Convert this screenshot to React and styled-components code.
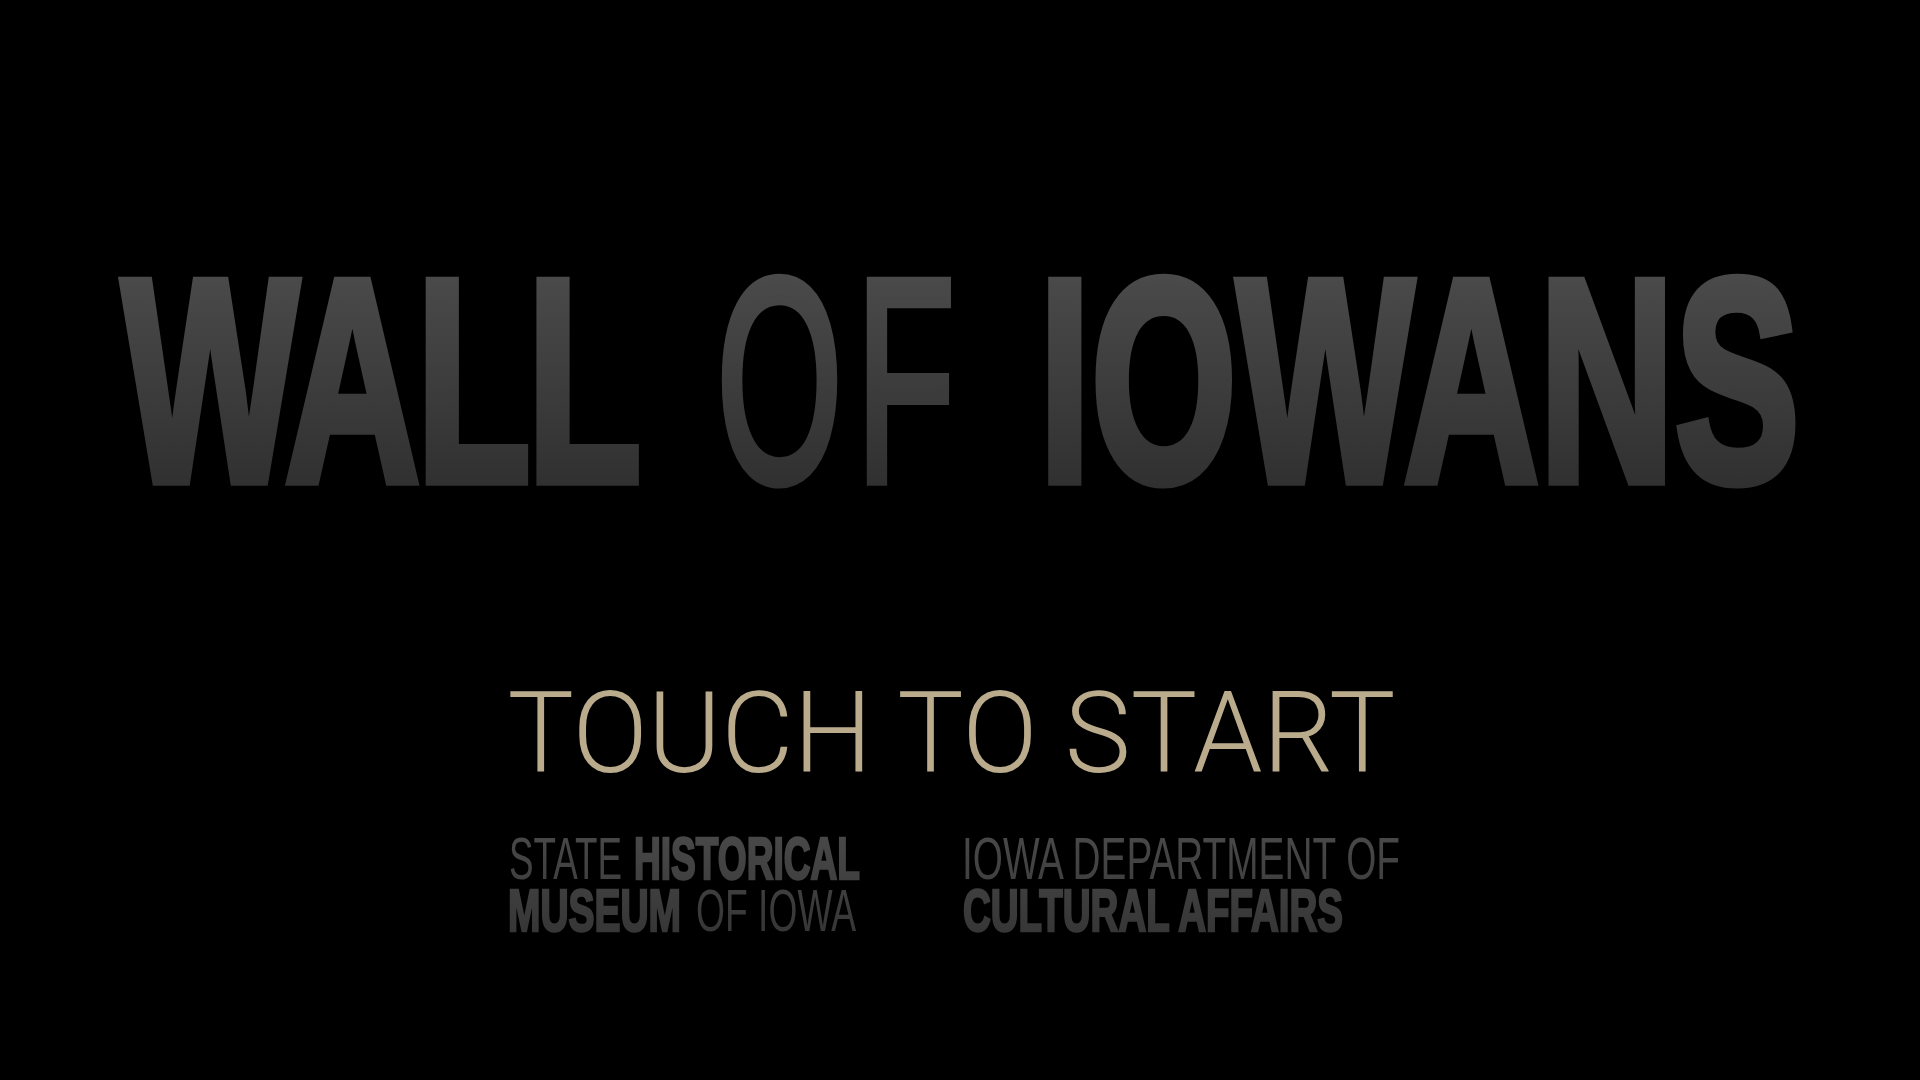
import React from 'react';
import styled, { createGlobalStyle } from 'styled-components';

const GlobalStyle = createGlobalStyle`
  html, body {
    margin: 0;
    padding: 0;
    background: #000;
  }
  body {
    font-family: "Liberation Sans", Arial, sans-serif;
  }
`;

const Screen = styled.main`
  box-sizing: border-box;
  width: 1920px;
  height: 1080px;
  padding: 235px 10px 0 0;
  display: flex;
  flex-direction: column;
  align-items: center;
  background: #000;
  overflow: hidden;
`;

const Title = styled.h1`
  position: relative;
  box-sizing: border-box;
  margin: 0;
  width: 100%;
  height: 290px;
  padding-left: 12px;
  display: flex;
  justify-content: center;
  font: 700 290px/290px "Liberation Sans", Arial, sans-serif;
  color: #4a4a4a;
  white-space: nowrap;

  /* darkens the letters towards the baseline */
  &::after {
    content: "";
    position: absolute;
    inset: 0;
    background: linear-gradient(to bottom, #fff 0%, #fff 13%, #a6a6a6 86%, #a6a6a6 100%);
    mix-blend-mode: multiply;
    pointer-events: none;
  }
`;

const TitleText = styled.span`
  flex-shrink: 0;
  display: inline-block;
  transform: scaleX(0.647);
  transform-origin: center;
  -webkit-text-stroke: 9.5px #4a4a4a;
  word-spacing: 28px;
`;

const Word = styled.span`
  letter-spacing: ${(p) => p.$track || 0}px;
`;

const LightWord = styled.span`
  display: inline-block;
  font-weight: 400;
  letter-spacing: 25px;
  margin: 0 -32px 0 -18px;
  transform: scaleX(0.86);
  transform-origin: center;
`;

const Prompt = styled.div`
  margin: 151px 6px 0 0;
  height: 114px;
  font: 300 114px/114px Roboto, "Liberation Sans", sans-serif;
  color: #b9ab8b;
  white-space: nowrap;
  transform: scaleX(0.977);
  transform-origin: center;
`;

const Logos = styled.div`
  margin-top: 40px;
  display: flex;
  align-items: flex-start;
  gap: 103px;
`;

const LogoMark = styled.svg`
  display: block;
  overflow: visible;
`;

function LogoText({ id, lines, width }) {
  return (
    <LogoMark width={width} height={106} viewBox={`0 0 ${width} 106`}>
      <defs>
        <linearGradient id={id} x1="0" y1="0" x2="0" y2="1">
          <stop offset="0" stopColor="#4a4a4a" />
          <stop offset="1" stopColor="#343434" />
        </linearGradient>
      </defs>
      <text fontFamily="'Liberation Sans', Arial, sans-serif" fontSize="59" fill={`url(#${id})`}>
        {lines.map((p) => (
          <tspan
            key={p.text}
            x={p.x}
            y={p.y}
            textLength={p.len}
            lengthAdjust="spacingAndGlyphs"
            fontWeight={p.bold ? 700 : 400}
            stroke={p.bold ? `url(#${id})` : 'none'}
            strokeWidth={p.bold ? 2.5 : 0}
          >
            {p.text}
          </tspan>
        ))}
      </text>
    </LogoMark>
  );
}

const museum = [
  { text: 'STATE', x: -1, y: 49, len: 113 },
  { text: 'HISTORICAL', x: 124, y: 49, len: 226, bold: true },
  { text: 'MUSEUM', x: -2, y: 101, len: 173, bold: true },
  { text: 'OF IOWA', x: 186, y: 101, len: 160 },
];

const culture = [
  { text: 'IOWA DEPARTMENT OF', x: -3, y: 49, len: 438 },
  { text: 'CULTURAL AFFAIRS', x: -2, y: 101, len: 380, bold: true },
];

export default function App() {
  return (
    <>
      <GlobalStyle />
      <Screen>
        <Title>
          <TitleText>
            <Word $track={-6}>WALL</Word> <LightWord>OF</LightWord> <Word>IOWANS</Word>
          </TitleText>
        </Title>
        <Prompt>TOUCH TO START</Prompt>
        <Logos>
          <LogoText id="museum-grad" lines={museum} width={352} />
          <LogoText id="culture-grad" lines={culture} width={436} />
        </Logos>
      </Screen>
    </>
  );
}
